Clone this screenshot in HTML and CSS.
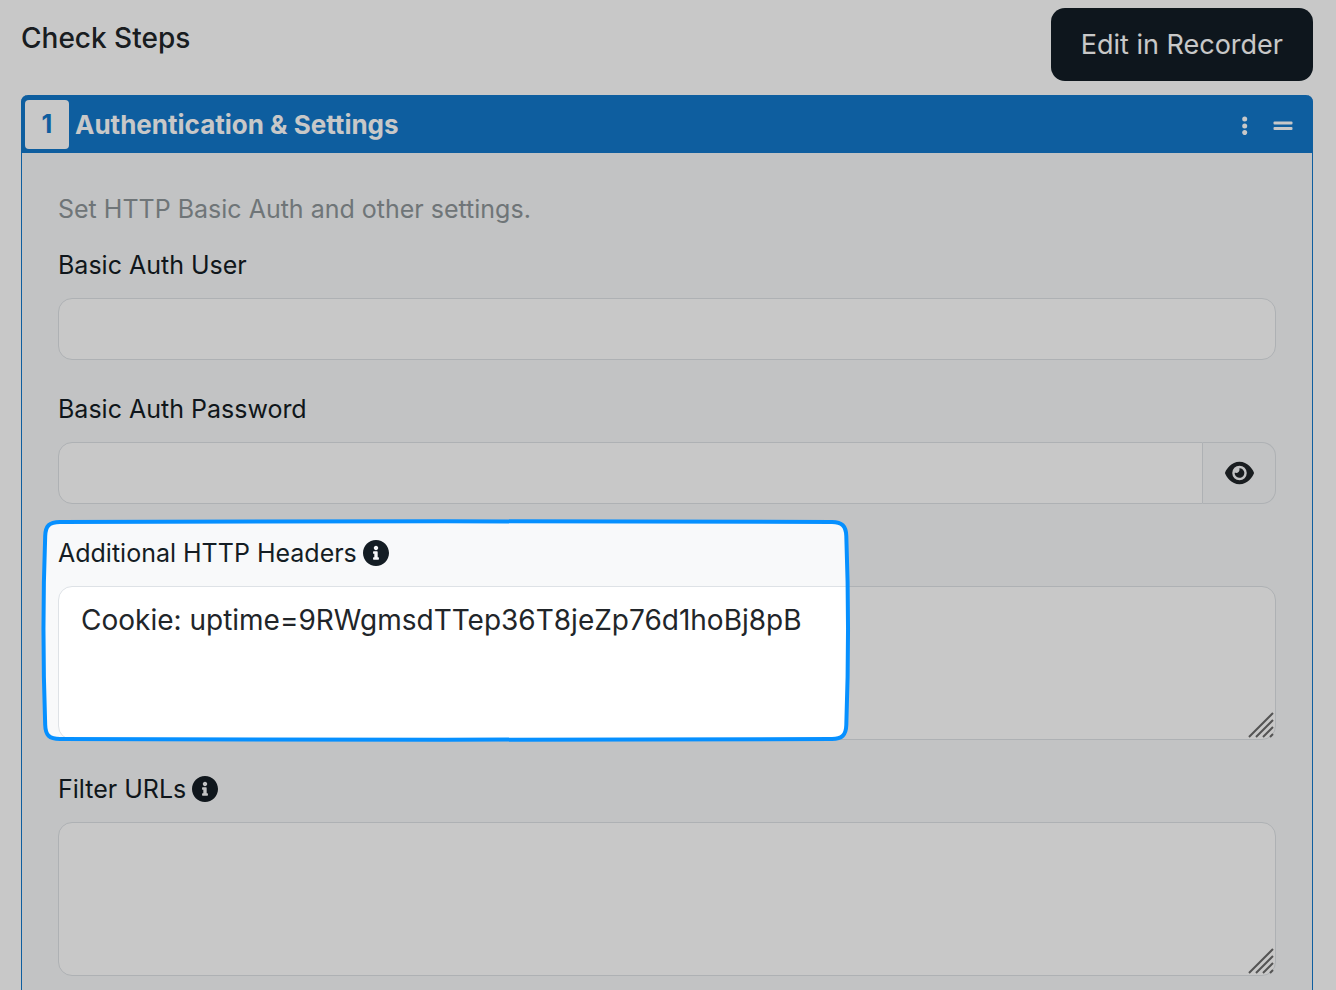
FILE: index.html
```html
<!DOCTYPE html>
<html lang="en">
<head>
<meta charset="utf-8">
<title>Check Steps</title>
<link rel="stylesheet" href="styles.css">
</head>
<body>
<main class="page">
  <header class="page-header">
    <h1 class="page-title">Check Steps</h1>
    <button class="recorder-button" type="button">Edit in Recorder</button>
  </header>
  <section class="step">
    <header class="step-header">
      <span class="step-number">1</span>
      <h2 class="step-title">Authentication &amp; Settings</h2>
      <button class="icon-button" type="button" aria-label="Step menu">
        <svg width="20" height="20" viewBox="0 0 20 20"><circle cx="9.700" cy="4" r="2.500"/><circle cx="9.700" cy="10.900" r="2.500"/><circle cx="9.700" cy="17.600" r="2.500"/></svg>
      </button>
      <button class="icon-button" type="button" aria-label="Reorder step">
        <svg width="20" height="20" viewBox="0 0 20 20"><rect x=".5" y="6.600" width="19" height="3" rx="1"/><rect x=".5" y="12" width="19" height="3" rx="1"/></svg>
      </button>
    </header>
    <div class="step-body">
      <p class="description">Set HTTP Basic Auth and other settings.</p>
      <div class="field">
        <label class="label" for="user">Basic Auth User</label>
        <input class="control" id="user" type="text">
      </div>
      <div class="field">
        <label class="label" for="password">Basic Auth Password</label>
        <div class="input-group">
          <input class="control" id="password" type="password">
          <button class="reveal" type="button" aria-label="Show password">
            <svg width="29" height="26" viewBox="0 0 576 512"><path d="M288 32c-80.800 0-145.500 36.800-192.600 80.600C48.600 156 17.300 208 2.500 243.700c-3.300 7.900-3.300 16.700 0 24.600C17.300 304 48.600 356 95.400 399.400C142.500 443.200 207.200 480 288 480s145.500-36.800 192.600-80.600c46.800-43.500 78.100-95.400 93-131.100c3.300-7.900 3.300-16.700 0-24.600c-14.900-35.700-46.200-87.700-93-131.100C433.500 68.800 368.800 32 288 32zM144 256a144 144 0 1 1 288 0 144 144 0 1 1 -288 0zm144-64c0 35.300-28.700 64-64 64c-7.100 0-13.900-1.200-20.300-3.300c-5.500-1.800-11.900 1.600-11.700 7.400c.3 6.900 1.300 13.800 3.200 20.700c13.700 51.200 66.400 81.600 117.600 67.900s81.600-66.400 67.900-117.600c-11.100-41.500-47.800-69.400-88.600-71.100c-5.800-.2-9.200 6.100-7.400 11.700c2.100 6.400 3.300 13.200 3.300 20.300z"/></svg>
          </button>
        </div>
      </div>
      <div class="field">
        <label class="label" for="headers">Additional HTTP Headers
          <svg class="info" viewBox="8 8 496 496"><path d="M256 8C119.043 8 8 119.083 8 256c0 136.997 111.043 248 248 248s248-111.003 248-248C504 119.083 392.957 8 256 8zm0 110c23.196 0 42 18.804 42 42s-18.804 42-42 42-42-18.804-42-42 18.804-42 42-42zm56 254c0 6.627-5.373 12-12 12h-88c-6.627 0-12-5.373-12-12v-24c0-6.627 5.373-12 12-12h12v-64h-12c-6.627 0-12-5.373-12-12v-24c0-6.627 5.373-12 12-12h64c6.627 0 12 5.373 12 12v100h12c6.627 0 12 5.373 12 12v24z"/></svg>
        </label>
        <div class="textarea-wrap">
          <textarea class="control textarea" id="headers" spellcheck="false">Cookie: uptime=9RWgmsdTTep36T8jeZp76d1hoBj8pB</textarea>
          <svg class="grip" viewBox="0 0 26 26"><path d="M1 25 25 1M8 25 25 8M15 25 25 15M22 25l3-3"/></svg>
        </div>
        <svg class="spotlight" width="808" height="223" viewBox="0 0 808 223" aria-hidden="true">
          <path class="shade" fill-rule="evenodd" d="M-4000-4000H6000V6000H-4000ZM18 3C200 2 610 2 790 3C800 3 804 7 804.300 17C806.300 70 806.300 150 804.300 206C804 216 800 220 790 220C610 221 200 221 18 220C7 220 3.500 216 3.200 206C1.200 150 1.200 70 3.200 17C3.500 7 7 3 18 3Z"/>
          <path class="ring" d="M18 3C200 2 610 2 790 3C800 3 804 7 804.300 17C806.300 70 806.300 150 804.300 206C804 216 800 220 790 220C610 221 200 221 18 220C7 220 3.500 216 3.200 206C1.200 150 1.200 70 3.200 17C3.500 7 7 3 18 3Z"/>
        </svg>
      </div>
      <div class="field">
        <label class="label" for="filters">Filter URLs
          <svg class="info" viewBox="8 8 496 496"><path d="M256 8C119.043 8 8 119.083 8 256c0 136.997 111.043 248 248 248s248-111.003 248-248C504 119.083 392.957 8 256 8zm0 110c23.196 0 42 18.804 42 42s-18.804 42-42 42-42-18.804-42-42 18.804-42 42-42zm56 254c0 6.627-5.373 12-12 12h-88c-6.627 0-12-5.373-12-12v-24c0-6.627 5.373-12 12-12h12v-64h-12c-6.627 0-12-5.373-12-12v-24c0-6.627 5.373-12 12-12h64c6.627 0 12 5.373 12 12v100h12c6.627 0 12 5.373 12 12v24z"/></svg>
        </label>
        <div class="textarea-wrap">
          <textarea class="control textarea" id="filters"></textarea>
          <svg class="grip" viewBox="0 0 26 26"><path d="M1 25 25 1M8 25 25 8M15 25 25 15M22 25l3-3"/></svg>
        </div>
      </div>
    </div>
  </section>
</main>
</body>
</html>
```

FILE: styles.css
```css
* {
  box-sizing: border-box;
}

body {
  margin: 0;
  background: #ffffff;
  color: #212529;
  font-family: Inter, "Liberation Sans", sans-serif;
  font-size: 25px;
}

button {
  border: 0;
  font: inherit;
}

.page {
  display: flex;
  flex-direction: column;
  gap: 14px;
  min-height: 100vh;
  padding: 8px 23px 0 21px;
  overflow: hidden;
}

.page-header {
  display: flex;
  justify-content: space-between;
  align-items: flex-start;
}

.page-title {
  margin: 0;
  padding-top: 12px;
  font-size: 28px;
  line-height: 36px;
  font-weight: 500;
}

.recorder-button {
  padding: 0 30px;
  border-radius: 14px;
  background: #121d25;
  color: #ffffff;
  font-size: 27px;
  line-height: 73px;
}

.step {
  flex: 1;
  border: 1px solid #1378cb;
  border-width: 0 1px;
  border-radius: 7px 7px 0 0;
  background: #f8f9fa;
}

.step-header {
  display: flex;
  align-items: center;
  gap: 6px;
  margin: 0 -1px;
  padding: 5px 17px 4px 4px;
  border-radius: 7px 7px 0 0;
  background: #1378cb;
}

.step-number {
  width: 44px;
  border-radius: 4px;
  background: #ffffff;
  color: #1378cb;
  font-weight: 700;
  line-height: 49px;
  text-align: center;
}

.step-title {
  flex: 1;
  margin: 0;
  color: #ffffff;
  font-size: 26px;
  font-weight: 700;
}

.icon-button {
  display: flex;
  padding: 6px;
  background: none;
  fill: #ffffff;
}

.icon-button + .icon-button {
  padding-right: 3px;
}

.step-body {
  padding: 36px 36px 13px;
}

.description {
  margin: 0 0 16px;
  color: #8e9699;
  line-height: 40px;
}

.field {
  position: relative;
}

.field + .field {
  margin-top: 29px;
}

.label {
  display: flex;
  align-items: center;
  gap: 6px;
  margin-bottom: 13px;
  color: #141d24;
  line-height: 40px;
}

.info {
  width: 26px;
  height: 26px;
  fill: #141d24;
}

.control {
  display: block;
  width: 100%;
  height: 62px;
  padding: 12px 22px;
  border: 1px solid #dee2e6;
  border-radius: 14px;
  outline: 0;
  background: #ffffff;
  color: #212529;
  font: inherit;
}

.input-group {
  display: flex;
}

.input-group .control {
  flex: 1;
  border-radius: 14px 0 0 14px;
}

.reveal {
  display: flex;
  align-items: center;
  justify-content: center;
  width: 73px;
  border: 1px solid #dee2e6;
  border-left: 0;
  border-radius: 0 14px 14px 0;
  background: #f8f9fa;
  fill: #212529;
}

.textarea-wrap {
  position: relative;
}

.textarea {
  height: 154px;
  font-size: 28px;
  line-height: 42px;
  resize: none;
  overflow: hidden;
}

.grip {
  position: absolute;
  right: 2px;
  bottom: 2px;
  width: 26px;
  height: 26px;
  fill: none;
  stroke: #6c6c6c;
  stroke-width: 2;
}

.spotlight {
  position: absolute;
  z-index: 2;
  top: -14px;
  left: -16px;
  overflow: visible;
  pointer-events: none;
}

.shade {
  fill: #000000;
  fill-opacity: 0.216;
}

.ring {
  fill: none;
  stroke: #0690ff;
  stroke-width: 4;
}
```
